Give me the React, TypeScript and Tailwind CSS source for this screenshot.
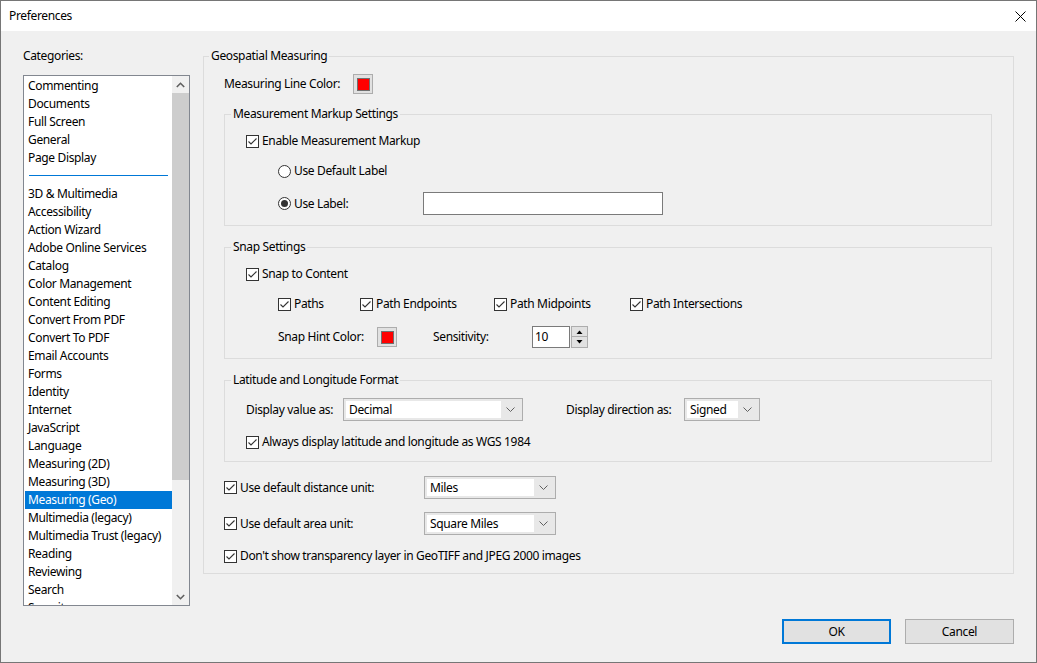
import React from "react"

const categories = [
  "Commenting",
  "Documents",
  "Full Screen",
  "General",
  "Page Display",
  "---",
  "3D & Multimedia",
  "Accessibility",
  "Action Wizard",
  "Adobe Online Services",
  "Catalog",
  "Color Management",
  "Content Editing",
  "Convert From PDF",
  "Convert To PDF",
  "Email Accounts",
  "Forms",
  "Identity",
  "Internet",
  "JavaScript",
  "Language",
  "Measuring (2D)",
  "Measuring (3D)",
  "Measuring (Geo)",
  "Multimedia (legacy)",
  "Multimedia Trust (legacy)",
  "Reading",
  "Reviewing",
  "Search",
  "Security",
]

function Check({ label }: { label: string }) {
  return (
    <div className="flex items-center h-[16px]">
      <span className="w-[13px] h-[13px] border border-[#333333] bg-white flex items-center justify-center shrink-0">
        <svg width="11" height="11" viewBox="0 0 11 11">
          <polyline points="1.5,5.5 4,8 9.5,2.5" fill="none" stroke="#333333" strokeWidth="1.1" />
        </svg>
      </span>
      <span className="ml-[3px] whitespace-nowrap">{label}</span>
    </div>
  )
}

function Radio({ checked, label }: { checked?: boolean; label: string }) {
  return (
    <div className="flex items-center h-[16px]">
      <span className="w-[13px] h-[13px] rounded-full border border-[#333333] bg-white flex items-center justify-center shrink-0">
        {checked && <span className="w-[7px] h-[7px] rounded-full bg-[#333333]" />}
      </span>
      <span className="ml-[3px] whitespace-nowrap">{label}</span>
    </div>
  )
}

function Swatch() {
  return (
    <span className="w-[20px] h-[20px] border border-[#adadad] bg-[#e1e1e1] flex items-center justify-center shrink-0">
      <span className="w-[13px] h-[13px] border border-[#707070] bg-[#ff0000]" />
    </span>
  )
}

function Chevron() {
  return (
    <svg width="9" height="6" viewBox="0 0 9 6">
      <polyline points="0.5,0.5 4.5,4.5 8.5,0.5" fill="none" stroke="#606060" strokeWidth="1" />
    </svg>
  )
}

function Select({ value, width }: { value: string; width: string }) {
  return (
    <div className={`${width} h-[23px] border border-[#adadad] bg-[#e8e8e8] flex p-[2px]`}>
      <div className="flex-1 bg-white pl-[3px] flex items-center">{value}</div>
      <div className="w-[19px] flex items-center justify-center">
        <Chevron />
      </div>
    </div>
  )
}

function Group({ title, className, children }: { title: string; className?: string; children: React.ReactNode }) {
  return (
    <fieldset className={`border border-[#dcdcdc] ${className ?? ""}`}>
      <legend className="ml-[6px] px-[2px] leading-[16px]">{title}</legend>
      <div className="pl-[21px]">{children}</div>
    </fieldset>
  )
}

export default function App() {
  return (
    <div className="w-[1037px] h-[663px] bg-[#f0f0f0] border border-[#767676] flex flex-col text-[12px] leading-[16px] tracking-[-0.35px] text-black font-['Noto_Sans',sans-serif] overflow-hidden">
      {/* Title bar */}
      <div className="h-[30px] bg-white flex items-center justify-between pl-[8px] pr-[10px] shrink-0">
        <span>Preferences</span>
        <svg width="11" height="11" viewBox="0 0 11 11">
          <path d="M0.5 0.5 L10.5 10.5 M10.5 0.5 L0.5 10.5" stroke="#000" strokeWidth="1" />
        </svg>
      </div>

      <div className="pt-[17px] pl-[22px] pr-[22px] flex flex-col">
        <div className="flex items-start">
          {/* Categories */}
          <div className="w-[167px] flex flex-col">
            <div>Categories:</div>
            <div className="mt-[11px] h-[531px] border border-[#828790] bg-white flex">
              <div className="flex-1 pl-px pt-px overflow-hidden">
                {categories.map((c, i) =>
                  c === "---" ? (
                    <div key={i} className="h-[18px] pt-[8px] pl-[4px] pr-[4px]">
                      <div className="h-px bg-[#0078d7]" />
                    </div>
                  ) : (
                    <div
                      key={i}
                      className={`h-[18px] flex items-center pl-[3px] whitespace-nowrap ${
                        c === "Measuring (Geo)" ? "bg-[#0078d7] text-white" : ""
                      }`}
                    >
                      {c}
                    </div>
                  )
                )}
              </div>
              <div className="w-[17px] bg-[#f0f0f0] flex flex-col">
                <div className="h-[17px] flex items-center justify-center">
                  <svg width="9" height="6" viewBox="0 0 9 6">
                    <polyline points="0.8,5 4.5,1.3 8.2,5" fill="none" stroke="#606060" strokeWidth="1.6" />
                  </svg>
                </div>
                <div className="h-[387px] bg-[#cdcdcd]" />
                <div className="flex-1" />
                <div className="h-[17px] flex items-center justify-center">
                  <svg width="9" height="6" viewBox="0 0 9 6">
                    <polyline points="0.8,1 4.5,4.7 8.2,1" fill="none" stroke="#606060" strokeWidth="1.6" />
                  </svg>
                </div>
              </div>
            </div>
          </div>

          {/* Geospatial Measuring */}
          <fieldset className="ml-[13px] w-[811px] border border-[#dcdcdc] pb-[9px]">
            <legend className="ml-[5px] px-[2px] leading-[16px]">Geospatial Measuring</legend>
            <div className="pl-[20px] pr-[21px]">
              <div className="mt-[10px] h-[20px] flex items-center">
                <span className="w-[129px]">Measuring Line Color:</span>
                <Swatch />
              </div>

              <Group title="Measurement Markup Settings" className="mt-[12px] pb-[10px]">
                <div className="mt-[11px]">
                  <Check label="Enable Measurement Markup" />
                </div>
                <div className="mt-[14px] pl-[32px]">
                  <Radio label="Use Default Label" />
                </div>
                <div className="mt-[13px] pl-[32px] h-[23px] flex items-center">
                  <div className="w-[145px]">
                    <Radio checked label="Use Label:" />
                  </div>
                  <div className="w-[240px] h-[23px] border border-[#7a7a7a] bg-white" />
                </div>
              </Group>

              <Group title="Snap Settings" className="mt-[13px] pb-[10px]">
                <div className="mt-[11px]">
                  <Check label="Snap to Content" />
                </div>
                <div className="mt-[14px] pl-[32px] flex">
                  <div className="w-[82px]">
                    <Check label="Paths" />
                  </div>
                  <div className="w-[134px]">
                    <Check label="Path Endpoints" />
                  </div>
                  <div className="w-[136px]">
                    <Check label="Path Midpoints" />
                  </div>
                  <Check label="Path Intersections" />
                </div>
                <div className="mt-[14px] pl-[32px] h-[22px] flex items-center">
                  <span className="w-[99px]">Snap Hint Color:</span>
                  <Swatch />
                  <span className="ml-[36px] w-[99px]">Sensitivity:</span>
                  <div className="w-[38px] h-[22px] border border-[#7a7a7a] bg-white flex items-center pl-[2px]">10</div>
                  <div className="ml-px w-[17px] h-[22px] flex flex-col">
                    <div className="h-[11px] border border-[#adadad] bg-[#e1e1e1] flex items-center justify-center">
                      <svg width="7" height="4" viewBox="0 0 7 4">
                        <polygon points="0.5,4 3.5,0.5 6.5,4" fill="#000" />
                      </svg>
                    </div>
                    <div className="h-[11px] border border-t-0 border-[#adadad] bg-[#e1e1e1] flex items-center justify-center">
                      <svg width="7" height="4" viewBox="0 0 7 4">
                        <polygon points="0.5,0 3.5,3.5 6.5,0" fill="#000" />
                      </svg>
                    </div>
                  </div>
                </div>
              </Group>

              <Group title="Latitude and Longitude Format" className="mt-[13px] pb-[11px]">
                <div className="mt-[10px] h-[23px] flex items-center">
                  <span className="w-[97px]">Display value as:</span>
                  <Select value="Decimal" width="w-[180px]" />
                  <span className="ml-[43px] w-[118px]">Display direction as:</span>
                  <Select value="Signed" width="w-[76px]" />
                </div>
                <div className="mt-[13px]">
                  <Check label="Always display latitude and longitude as WGS 1984" />
                </div>
              </Group>

              <div className="mt-[14px] h-[23px] flex items-center">
                <div className="w-[200px]">
                  <Check label="Use default distance unit:" />
                </div>
                <Select value="Miles" width="w-[132px]" />
              </div>
              <div className="mt-[13px] h-[23px] flex items-center">
                <div className="w-[200px]">
                  <Check label="Use default area unit:" />
                </div>
                <Select value="Square Miles" width="w-[132px]" />
              </div>
              <div className="mt-[13px]">
                <Check label="Don't show transparency layer in GeoTIFF and JPEG 2000 images" />
              </div>
            </div>
          </fieldset>
        </div>

        {/* Buttons */}
        <div className="mt-[13px] flex justify-end gap-[14px]">
          <button className="w-[109px] h-[25px] border-2 border-[#0078d7] bg-[#e1e1e1] flex items-center justify-center">
            OK
          </button>
          <button className="w-[109px] h-[25px] border border-[#adadad] bg-[#e1e1e1] flex items-center justify-center">
            Cancel
          </button>
        </div>
      </div>
    </div>
  )
}
